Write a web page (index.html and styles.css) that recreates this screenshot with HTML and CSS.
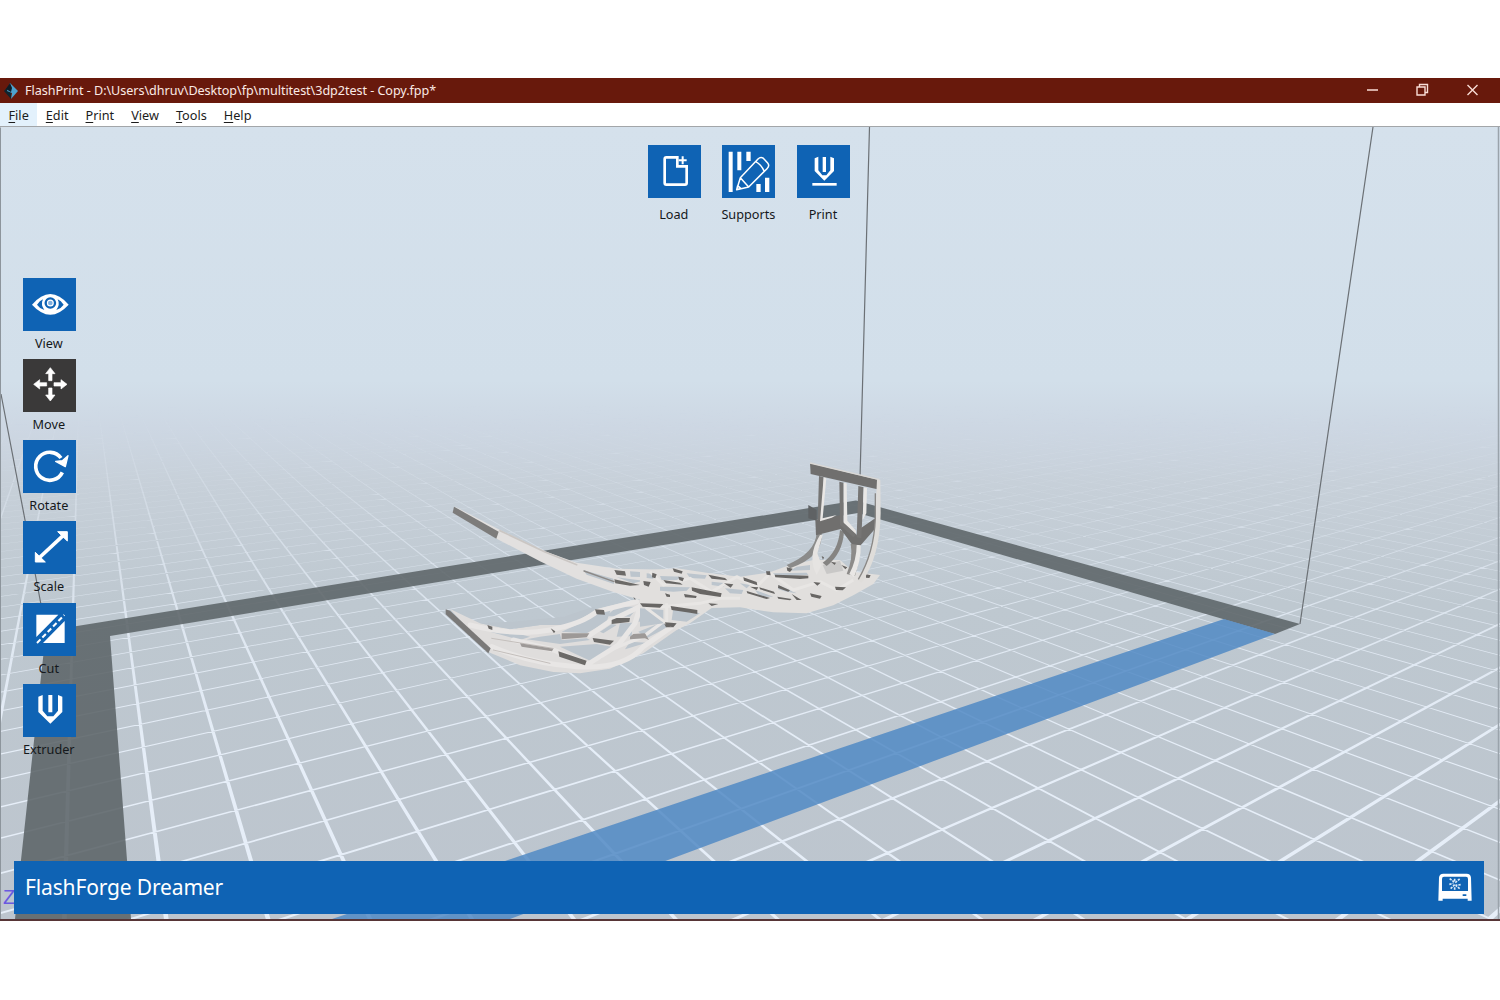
FILE: index.html
```html
<!DOCTYPE html>
<html lang="en">
<head>
<meta charset="utf-8">
<title>FlashPrint</title>
<link rel="stylesheet" href="styles.css">
</head>
<body>
<div class="window">
  <header class="titlebar">
    <svg class="logo" viewBox="0 0 16 18"><path d="M8 1 1 9l7 8z" fill="#10242e"/><path d="M7 1l8 8-7 8 1-6-5-2z" fill="#4da3cf"/><path d="M7 1 3 7l5 3 1-4z" fill="#0e1c26"/></svg>
    <span class="title">FlashPrint - D:\Users\dhruv\Desktop\fp\multitest\3dp2test - Copy.fpp*</span>
    <svg class="winbtns" viewBox="0 0 120 24"><path d="M7 11h11M57 8h8v8h-8zM59.500 8V5.500h8v8H65M107.500 6l10 10M117.500 6l-10 10" fill="none" stroke="#f9ddd6" stroke-width="1.400"/></svg>
  </header>
  <nav class="menubar">
    <span class="menu active"><u>F</u>ile</span><span class="menu"><u>E</u>dit</span><span class="menu"><u>P</u>rint</span><span class="menu"><u>V</u>iew</span><span class="menu"><u>T</u>ools</span><span class="menu"><u>H</u>elp</span>
  </nav>
  <main class="stage">
    <svg class="scene" viewBox="0 127 1500 792" preserveAspectRatio="none">
      <defs>
        <linearGradient id="sky" gradientUnits="userSpaceOnUse" x1="0" y1="127" x2="0" y2="919">
          <stop offset="0" stop-color="#d5e1ec"/><stop offset=".32" stop-color="#d2dfea"/><stop offset=".38" stop-color="#cdd7e3"/><stop offset=".45" stop-color="#c7d0d9"/><stop offset=".6" stop-color="#bec8d0"/><stop offset="1" stop-color="#bdc5ce"/>
        </linearGradient>
        <linearGradient id="fog" gradientUnits="userSpaceOnUse" x1="0" y1="405" x2="0" y2="760">
          <stop offset="0" stop-color="#fff" stop-opacity="0"/><stop offset=".25" stop-color="#fff" stop-opacity=".36"/><stop offset=".6" stop-color="#fff" stop-opacity=".8"/><stop offset="1" stop-color="#fff"/>
        </linearGradient>
        <mask id="fade" maskUnits="userSpaceOnUse" x="0" y="127" width="1500" height="800"><rect y="405" width="1500" height="520" fill="url(#fog)"/></mask>
      </defs>
      <rect y="127" width="1500" height="792" fill="url(#sky)"/>
      <g mask="url(#fade)"><path id="grid" fill="#e6eef8"/></g>
      <g fill="#5c6468" fill-opacity=".88">
        <path d="M15 919 21 860 46 631 856 500.500 1300 624 1275 634 858 513 110 636 127 860 131 919z"/>
      </g>
      <path d="M1224 619 1275 634 668 860 510 919H332L508 860z" fill="#5189c4" fill-opacity=".85"/>
      <path d="M869.500 127 860 478M1373 127 1300 624M1 394 25 520 46 631" fill="none" stroke="#6b7075" stroke-width="1.200"/>

      <!-- two forearm straps of the lattice brace -->
      <g transform="translate(430 490) scale(.33333)" stroke-linejoin="round" stroke-linecap="round">
        <path d="M72 48 210 120 345 184 440 218 560 236 750 240 750 350 640 332 550 306 440 266 330 214 200 146z" fill="#e2e0df"/>
        <path d="M72 50 206 125 199 146 68 68z" fill="#7d7c7b"/>
        <path d="M210 122 345 186 440 224" fill="none" stroke="#cac6c3" stroke-width="5"/>
        <g fill="#bcc5cd">
          <path d="M460 240 550 266 552 282 470 254zM560 262 640 272 610 280zM600 244 660 248 665 262 602 260zM690 246 735 246 740 262 690 264zM660 290 750 296 750 304 670 302z"/>
        </g>
        <path d="M462 243 552 275" stroke="#8c8987" stroke-width="4"/>
        <g fill="#6c6a68">
          <path d="M553 240 585 244 588 257 560 254zM553 268 630 285 600 287 556 280zM645 275 663 277 660 292 643 290zM664 243 674 243 680 262 668 260zM697 270 745 275 750 286 700 280zM730 240 748 244 745 252 732 248zM700 305 718 312 718 322 704 318zM610 320 625 335 618 340z"/>
        </g>
        <path d="M60 357 150 400 240 418 330 405 420 405 500 358 610 330 700 330 840 330 740 420 640 490 540 536 450 550 370 546 270 526 180 488z" fill="#dfdddc"/>
        <g fill="#bcc5cd">
          <path d="M150 400 240 418 330 405 420 405 500 358 490 350 400 380 250 395zM180 425 270 450 300 440 240 425zM290 448 390 462 480 450 470 445 395 450 390 432 330 440zM395 425 470 430 530 395 545 350 460 395zM390 470 480 512 515 505 545 470 500 462zM530 378 600 380 625 350 560 350zM560 440 605 438 608 398 570 400zM520 430 560 405 545 402 510 425zM585 478 650 458 600 455zM650 445 735 400 700 395 625 425zM640 350 695 355 700 390 625 395zM730 360 790 365 750 395 728 395z"/>
        </g>
        <g fill="none" stroke="#e8e6e5" stroke-width="15">
          <path d="M120 405Q260 440 360 420T500 365L620 335M185 470Q300 520 440 530T640 470L790 365M480 435 545 390 640 345M470 525 565 465 615 400 632 345M250 450 370 480 470 520"/>
          <path d="M540 480 640 440 700 395 712 350" stroke-width="10"/>
        </g>
        <path d="M185 445 370 475M190 480 360 520" fill="none" stroke="#c4bfbc" stroke-width="3"/>
        <path d="M47 358 60 362 182 475 175 490 47 373z" fill="#7a7978"/>
        <g fill="#6c6a68">
          <path d="M495 358 522 360 525 374 500 373zM172 405 187 410 187 420 176 416zM362 415 376 424 372 430zM638 342 700 342 697 354 642 353zM545 390 560 384 600 384 598 396 545 402zM488 444 552 452 540 464 492 456zM385 484 470 512 465 526 388 500zM702 400 742 400 732 412 708 412zM722 345 750 348 750 361 724 360z"/>
        </g>
        <path d="M395 430 478 430 470 442 395 448zM600 440 610 432 645 430 657 450 645 445 600 448zM270 460 370 476 366 484 275 470z" fill="#9d9997"/>
      </g>

      <!-- palm cup and finger frame -->
      <g transform="translate(640 450) scale(.33333)" stroke-linejoin="round">
        <path d="M505 165 530 180 530 212 505 205z" fill="#5f6264"/>
        <path d="M0 362 110 355 210 370 300 380 385 368 450 345 520 330 600 330 640 365 720 375 700 402 640 436 580 466 500 490 400 487 300 472 215 474 150 520 110 540 0 480z" fill="#e1dfdd"/>
        <g fill="#bcc5cd">
          <path d="M20 370 40 372 40 386 20 384zM60 378 130 380 110 390 65 390zM140 370 200 376 195 386 150 384zM60 410 150 412 140 422 100 425 60 422zM215 395 260 400 250 410 215 405zM255 415 310 420 305 432 270 430zM300 400 330 405 320 415zM345 420 400 440 360 440zM415 405 470 430 440 425 415 418zM400 370 500 368 505 375 400 378zM470 350 510 345 510 360 450 362zM100 475 180 490 140 515 95 510zM0 475 70 480 70 520 0 530z"/>
        </g>
        <path d="M548 345 600 332 610 362 560 372z" fill="#c9c8c7"/>
        <g fill="none" stroke="#e8e6e4" stroke-width="9">
          <path d="M30 365 70 405 150 385 215 425 290 380 350 410 390 370 460 420 540 395 590 420 640 390M80 460 80 520 20 475 180 460 240 445 300 445"/>
        </g>
        <g fill="#686664">
          <path d="M37 368 50 373 46 385 36 382zM98 355 128 364 125 371 102 365zM115 380 132 384 128 394 118 390zM10 393 32 396 26 410 12 405zM70 390 120 398 128 404 78 400zM205 374 255 384 262 391 215 386zM155 412 245 430 242 441 180 432 156 422zM75 430 90 434 90 441 80 440zM132 432 170 438 168 444 135 442zM252 400 280 403 272 413zM310 382 350 396 352 406 312 392zM330 410 355 412 350 420zM320 423 390 444 380 447 322 430zM358 412 402 425 405 432 360 418zM404 374 505 377 505 385 480 387 406 382zM378 364 390 364 392 376 380 374zM440 352 458 356 450 366 442 362zM415 405 450 421 445 425 414 414zM412 440 455 447 450 451 415 446zM455 432 485 450 470 450zM510 430 545 438 540 446 514 440zM520 396 542 398 532 407zM585 410 618 412 608 421 588 420zM604 345 622 352 616 358zM678 373 692 376 688 384 678 383zM572 335 588 338 584 345zM545 318 552 322 549 330zM0 460 70 462 60 473 8 470zM92 468 172 480 172 492 150 488 95 480zM75 517 110 520 100 532 78 528zM205 460 235 462 215 468z"/>
        </g>
        <path d="M530 250Q525 310 440 345L450 355Q550 320 545 250z" fill="#8b8b8a"/>
        <path d="M540 255Q500 320 530 375L545 345 532 310 548 255z" fill="#e6e4e2"/>
        <path d="M600 240Q595 305 548 338L560 348Q608 310 612 245z" fill="#858482"/>
        <path d="M632 282Q640 325 620 372L645 378Q662 320 660 282z" fill="#8d8b89"/>
        <path d="M650 285Q650 330 628 372L642 382Q664 330 662 285z" fill="#e9e7e5"/>
        <path d="M526 210 600 196 612 222 650 256 662 235 712 200 702 240 662 286 635 282 602 237 528 256z" fill="#706f6e"/>
        <path d="M537 78 551 82 546 208 533 212zM598 95 611 98 611 215 650 253 640 262 600 225zM655 108 671 112 664 265 650 262z" fill="#767574"/>
        <path d="M551 82 559 84 548 205 590 195 575 203 540 214zM611 98 620 100 622 212 648 242 648 252 611 218zM671 112 681 114 679 190 668 210z" fill="#e9e7e5"/>
        <path d="M510 40 716 90 712 118 512 72z" fill="#706f6e"/>
        <path d="M510 39 718 89" stroke="#dad8d5" stroke-width="4"/>
        <path d="M711 88 721 90 722 190Q720 320 665 398L652 390Q704 310 706 200z" fill="#dfddda"/>
        <path d="M706 130V205Q702 310 655 388" fill="none" stroke="#8a8886" stroke-width="4"/>
      </g>
      <text x="3" y="904" class="axis">Z</text>
      <path d="M.500 919V127.500" stroke="#8d959c"/><path d="M1498.500 919V127" stroke="#9aa3ab" stroke-width="1.500"/>
    </svg>

    <div class="tools top">
      <div class="tool"><svg class="ico" viewBox="0 0 159 159"><path d="M88 37H55q-5 0-5 5v72q0 5 5 5h56q5 0 5-5V64H88z" fill="none" stroke="#fff" stroke-width="8"/><path d="M104 34v24M92 46h24" stroke="#fff" stroke-width="6"/></svg><span>Load</span></div>
      <div class="tool"><svg class="ico" viewBox="0 0 159 159"><path d="M20 20h12v121H20zM46 20h12v56H46zM73 20h13v28H73zM103 117h13v24h-13zM129 98h13v43h-13z" fill="#fff"/><path d="M44 134 55 98 108 42Q117 33 126 42L137 54Q144 62 135 71L80 126zM55 98 80 126M101 50q16 8 26 29M44 134l12-4-9-8z" fill="#0f63b4" stroke="#fff" stroke-width="4.500" stroke-linejoin="round"/></svg><span>Supports</span></div>
      <div class="tool"><svg class="ico" viewBox="0 0 159 159"><path d="M53 40 64 35V76L76 91H88L100 76V35L111 40V78L82 107 53 78zM77 36h10v45H77z" fill="#fff"/><path d="M46 118h73" stroke="#fff" stroke-width="8"/></svg><span>Print</span></div>
    </div>

    <div class="tools side">
      <div class="tool"><svg class="ico" viewBox="0 0 159 159"><path d="M27 80Q82 16 137 80 82 140 27 80z" fill="#fff"/><path d="M42 80Q50 68 60 64 52 80 64 96 50 92 42 80zM122 80Q114 68 104 64 112 80 100 96 114 92 122 80z" fill="#0f63b4"/><circle cx="82" cy="75" r="14" fill="none" stroke="#0f63b4" stroke-width="7"/><circle cx="82" cy="75" r="7" fill="#7fb0e0"/></svg><span>View</span></div>
      <div class="tool"><svg class="ico dark" viewBox="0 0 159 159"><path id="arm" d="M77 65V44H68L82 26 96 44H87V65z" fill="#fff" stroke="#fff" stroke-width="2" stroke-linejoin="round"/><use href="#arm" transform="rotate(90 82 76)"/><use href="#arm" transform="rotate(180 82 76)"/><use href="#arm" transform="rotate(270 82 76)"/></svg><span>Move</span></div>
      <div class="tool"><svg class="ico" viewBox="0 0 159 159"><path d="M114 54A42 42 0 1 0 118 97" fill="none" stroke="#fff" stroke-width="11"/><path d="M98 64 118 62 135 47 127 80z" fill="#fff" stroke="#fff" stroke-width="4" stroke-linejoin="round"/></svg><span>Rotate</span></div>
      <div class="tool"><svg class="ico" viewBox="0 0 159 159"><path d="M48 111 121 43" stroke="#fff" stroke-width="11"/><path d="M104 32h29v28zM37 94v29h30z" fill="#fff" stroke="#fff" stroke-width="3" stroke-linejoin="round"/></svg><span>Scale</span></div>
      <div class="tool"><svg class="ico" viewBox="0 0 159 159"><path d="M40 35h66L40 102zM125 54v66H60z" fill="#fff"/><path d="M42 120 124 36" stroke="#fff" stroke-width="6" stroke-dasharray="15 8"/></svg><span>Cut</span></div>
      <div class="tool"><svg class="ico" viewBox="0 0 159 159"><path d="M46 38 59 33V80L73 97H91L105 80V33L118 38V84L82 119 46 84zM76 33h12v52H76z" fill="#fff"/></svg><span>Extruder</span></div>
    </div>

    <footer class="status">
      <span>FlashForge Dreamer</span>
      <svg class="printer" viewBox="0 0 102 84"><path fill-rule="evenodd" d="M16 2H86Q98 2 99 14L101 83H89V77H14V83H1L3 14Q4 2 16 2zM18 11Q12 11 12 18V54H90V18Q90 11 84 11zM74 64v5h11v-5z" fill="#fff"/><path d="M35 17l14 10M65 18 50 30M34 34l12-3M68 35l-16 2M38 47l12-12M65 47 54 38M50 17v8M50 43v7" stroke="#dbe9f7" stroke-width="5" stroke-dasharray="7 3"/></svg>
    </footer>
  </main>
</div>
<script src="grid.js"></script>
</body>
</html>
```
FILE: styles.css
```css
* { box-sizing: border-box; }
body {
  margin: 0;
  padding-top: 78px;
  height: 1000px;
  overflow: hidden;
  background: #fff;
  font-family: "Noto Sans", "Open Sans", sans-serif;
}
.window {
  display: flex;
  flex-direction: column;
  width: 1500px;
  height: 843px;
  border-bottom: 2px solid #573536;
}
.titlebar {
  display: flex;
  align-items: center;
  height: 25px;
  background: #68190c;
  color: #fbeae5;
  font-size: 12.600px;
}
.logo { width: 16px; height: 18px; margin: 0 6px 0 3px; }
.title { flex: 1; white-space: nowrap; letter-spacing: -.05px; }
.winbtns { width: 120px; height: 24px; margin-right: 20px; }
.menubar {
  display: flex;
  height: 24px;
  border-bottom: 1px solid #a3a6a9;
  color: #1c1c1c;
  font-size: 12.700px;
  line-height: 24px;
}
.menu { padding: 0 8.500px; }
.menu.active { background: #e3f1fc; }
.menu u { text-underline-offset: 2px; }
.stage { position: relative; flex: 1; }
.scene { display: block; width: 1500px; height: 792px; }
.axis { font-size: 20px; fill: #6a5ae0; font-family: "Liberation Sans", sans-serif; }
.tools { position: absolute; display: flex; }
.top { left: 637px; top: 18px; }
.side { left: 12px; top: 150.500px; flex-direction: column; }
.tool {
  display: flex;
  flex-direction: column;
  align-items: center;
  width: 74.600px;
  font-size: 12.700px;
  line-height: 16px;
  color: #15181b;
}
.side .tool { height: 81.250px; }
.tool span { margin-top: 8px; margin-right: 1px; }
.side .tool span { margin-top: 4px; }
.ico { width: 53px; height: 53px; background: #0f63b4; }
.ico.dark { background: #3a3939; }
.status {
  position: absolute;
  left: 14px;
  right: 16px;
  top: 733.500px;
  height: 53px;
  display: flex;
  align-items: center;
  justify-content: space-between;
  padding: 0 12px 0 11px;
  background: #0f63b4;
  color: #fff;
  font-size: 21px;
  letter-spacing: -.15px;
}
.printer { width: 34px; height: 28px; }
```
FILE: grid.js
```js
// Floor grid: two families of lines, each converging on its own vanishing point.
(function () {
  var horizon = 285, base = 860, bottom = 925;
  function family(vx, x0, step, from, to, half) {
    var d = '';
    for (var k = from; k <= to; k++) {
      var x = x0 + step * k, s = (bottom - horizon) / (base - horizon);
      var bx = vx + (x - vx) * s;
      d += 'M' + vx + ' ' + horizon + 'L' + (bx - half * s).toFixed(1) + ' ' + bottom + 'H' + (bx + half * s).toFixed(1) + 'z';
    }
    return d;
  }
  document.getElementById('grid').setAttribute('d',
    family(82, 66, 92.4, -4, 75, 2.1) + family(2205, 187, 136.9, -80, 14, 3.3));
})();
```
